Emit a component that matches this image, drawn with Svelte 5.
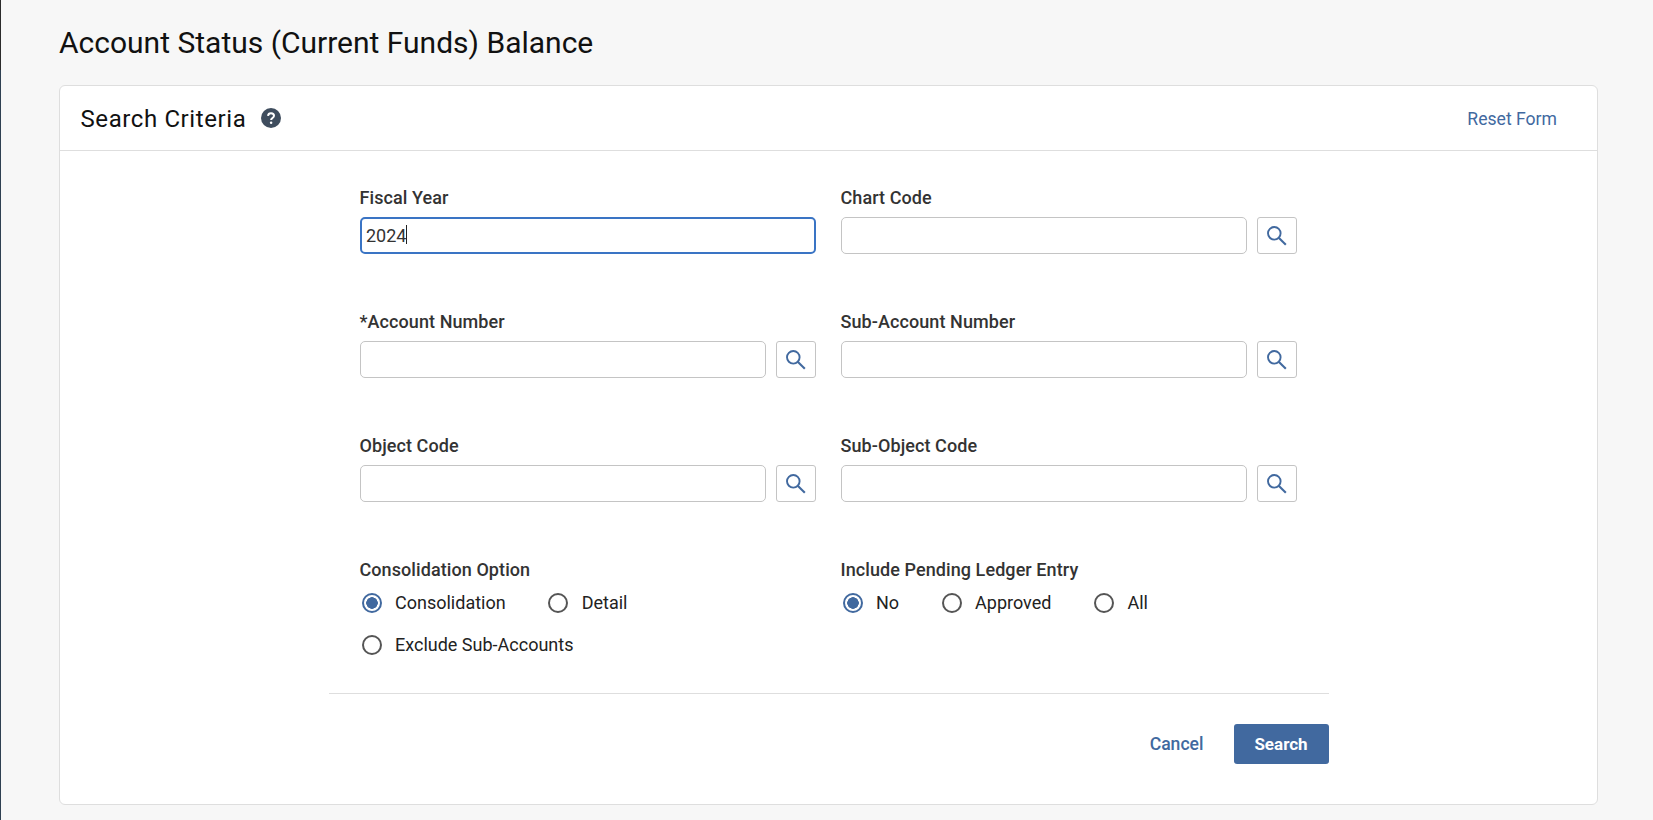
<script>
  const searchFields = [
    [{ label: 'Fiscal Year', value: '2024', focused: true, lookup: false }, { label: 'Chart Code', lookup: true }],
    [{ label: '*Account Number', lookup: true }, { label: 'Sub-Account Number', lookup: true }],
    [{ label: 'Object Code', lookup: true }, { label: 'Sub-Object Code', lookup: true }]
  ];
</script>

<div class="page">
  <div class="rail"></div>
  <main class="main">
    <h1 class="title">Account Status (Current Funds) Balance</h1>
    <section class="card">
      <header class="card-head">
        <div class="head-left">
          <h2 class="card-title">Search Criteria</h2>
          <svg class="help" viewBox="0 0 20 20" aria-hidden="true">
            <circle cx="10" cy="10" r="10" fill="#3f4d5e" />
            <path d="M7 7.8a3 3 0 0 1 3-2.6c1.800 0 3 1.100 3 2.500 0 2.300-2.900 2.200-2.900 4.300" fill="none" stroke="#fff" stroke-width="2" />
            <circle cx="10.100" cy="14.800" r="1.250" fill="#fff" />
          </svg>
        </div>
        <a class="reset" href="#reset">Reset Form</a>
      </header>

      <form class="form">
        <div class="grid">
          {#each searchFields as row}
            {#each row as f}
              <div class="field">
                <label class="lbl" for={f.label}>{f.label}</label>
                <div class="control">
                  <div class="input-wrap">
                    <input id={f.label} class="input" class:focused={f.focused} value={f.value ?? ''} />
                    {#if f.focused}<span class="caret"></span>{/if}
                  </div>
                  {#if f.lookup}
                    <button type="button" class="lookup" aria-label="Search {f.label}">
                      <svg viewBox="0 0 20 20" width="20" height="20">
                        <circle cx="7.300" cy="7.300" r="6.300" fill="none" stroke="#41699f" stroke-width="1.900" />
                        <path d="M12 12 18.800 18.800" fill="none" stroke="#41699f" stroke-width="2.100" />
                      </svg>
                    </button>
                  {/if}
                </div>
              </div>
            {/each}
          {/each}

          <fieldset class="radios">
            <legend class="lbl">Consolidation Option</legend>
            <div class="radio-row">
              <label class="radio"><span class="dot on"></span>Consolidation</label>
              <label class="radio"><span class="dot"></span>Detail</label>
            </div>
            <div class="radio-row second">
              <label class="radio"><span class="dot"></span>Exclude Sub-Accounts</label>
            </div>
          </fieldset>

          <fieldset class="radios">
            <legend class="lbl">Include Pending Ledger Entry</legend>
            <div class="radio-row">
              <label class="radio"><span class="dot on"></span>No</label>
              <label class="radio"><span class="dot"></span>Approved</label>
              <label class="radio"><span class="dot"></span>All</label>
            </div>
          </fieldset>
        </div>

        <footer class="actions">
          <button type="button" class="cancel">Cancel</button>
          <button type="button" class="search">Search</button>
        </footer>
      </form>
    </section>
  </main>
</div>

<style>
  :global(body) {
    margin: 0;
    background: #f7f7f7;
    font-family: Roboto, "Liberation Sans", sans-serif;
    overflow: hidden;
  }
  .page {
    display: flex;
    height: 820px;
    overflow: hidden;
    background: #f7f7f7;
    color: #212529;
  }
  .rail {
    width: 1px;
    flex: none;
    background: linear-gradient(to bottom, #2b2b2b 0, #2b2b2b 70px, #2f4052 70px);
  }
  .main {
    flex: 1;
    min-width: 0;
    padding: 25px 55px 0 58px;
  }
  .title {
    margin: 0;
    font-size: 30px;
    line-height: 36px;
    font-weight: 400;
    color: #111;
    height: 60px;
  }
  .card {
    background: #fff;
    border: 1px solid #dedede;
    border-radius: 6px;
    height: 720px;
    box-sizing: border-box;
  }
  .card-head {
    height: 65px;
    box-sizing: border-box;
    border-bottom: 1px solid #dedede;
    display: flex;
    align-items: center;
    justify-content: space-between;
    padding: 0 40px 0 20.500px;
  }
  .head-left {
    display: flex;
    align-items: center;
    gap: 15px;
  }
  .card-title {
    margin: 0;
    padding-top: 1px;
    font-size: 24px;
    font-weight: 400;
    color: #111;
    letter-spacing: 0.6px;
  }
  .help {
    width: 20px;
    height: 20px;
  }
  .reset {
    padding-top: 2px;
    font-size: 17.600px;
    color: #41699f;
    text-decoration: none;
    font-weight: 400;
  }
  .form {
    width: 1000px;
    margin: 0 auto;
    padding-top: 36px;
  }
  .grid {
    display: grid;
    grid-template-columns: 456px 456px;
    column-gap: 25px;
    padding: 0 31px;
    grid-auto-rows: 124px;
    height: 506px;
  }
  .field, .radios {
    min-width: 0;
  }
  .lbl {
    display: block;
    font-size: 18px;
    line-height: 22px;
    font-weight: 500;
    letter-spacing: 0.08px;
    color: #333;
    margin-bottom: 8px;
    padding: 0;
  }
  .control {
    display: flex;
    gap: 10px;
    height: 37px;
  }
  .input-wrap {
    flex: 1;
    position: relative;
    min-width: 0;
  }
  .input {
    width: 100%;
    height: 100%;
    box-sizing: border-box;
    border: 1px solid #c4c4c4;
    border-radius: 5px;
    padding: 0 5px;
    font: 400 18px Roboto, sans-serif;
    color: #333;
    background: #fff;
    outline: none;
  }
  .input.focused {
    border: 2px solid #3a74c4;
    padding: 0 4.500px;
  }
  .caret {
    position: absolute;
    left: 46px;
    top: 8px;
    width: 1px;
    height: 19px;
    background: #222;
  }
  .lookup {
    flex: none;
    width: 40px;
    box-sizing: border-box;
    padding: 0;
    background: #fff;
    border: 1px solid #c4c4c4;
    border-radius: 3px;
    display: flex;
    align-items: center;
    justify-content: center;
  }
  .radios {
    border: 0;
    margin: 0;
    padding: 1px 0 0;
  }
  .radios .lbl {
    margin-bottom: 7px;
  }
  .radio-row {
    display: flex;
    height: 27px;
    align-items: center;
  }
  .radio-row.second {
    margin-top: 15px;
  }
  .radio {
    display: inline-flex;
    align-items: center;
    font-size: 18px;
    color: #222;
    gap: 13.500px;
    margin-right: 40.500px;
  }
  .dot {
    width: 20px;
    height: 20px;
    border-radius: 50%;
    box-sizing: border-box;
    border: 2px solid #555;
    background: #fff;
    margin-left: 2px;
  }
  .dot.on {
    border-color: #41699f;
    background: radial-gradient(circle, #41699f 0, #41699f 5.500px, #fff 6px);
  }
  .actions {
    border-top: 1px solid #dedede;
    display: flex;
    justify-content: flex-end;
    align-items: center;
    gap: 30px;
    padding-top: 30px;
  }
  .cancel {
    background: none;
    border: 0;
    padding: 0;
    font: 500 17.600px Roboto, sans-serif;
    color: #41699f;
  }
  .search {
    width: 95px;
    height: 40px;
    background: #41699f;
    color: #fff;
    border: 0;
    border-radius: 3px;
    font: 700 17px Roboto, sans-serif;
  }
</style>
